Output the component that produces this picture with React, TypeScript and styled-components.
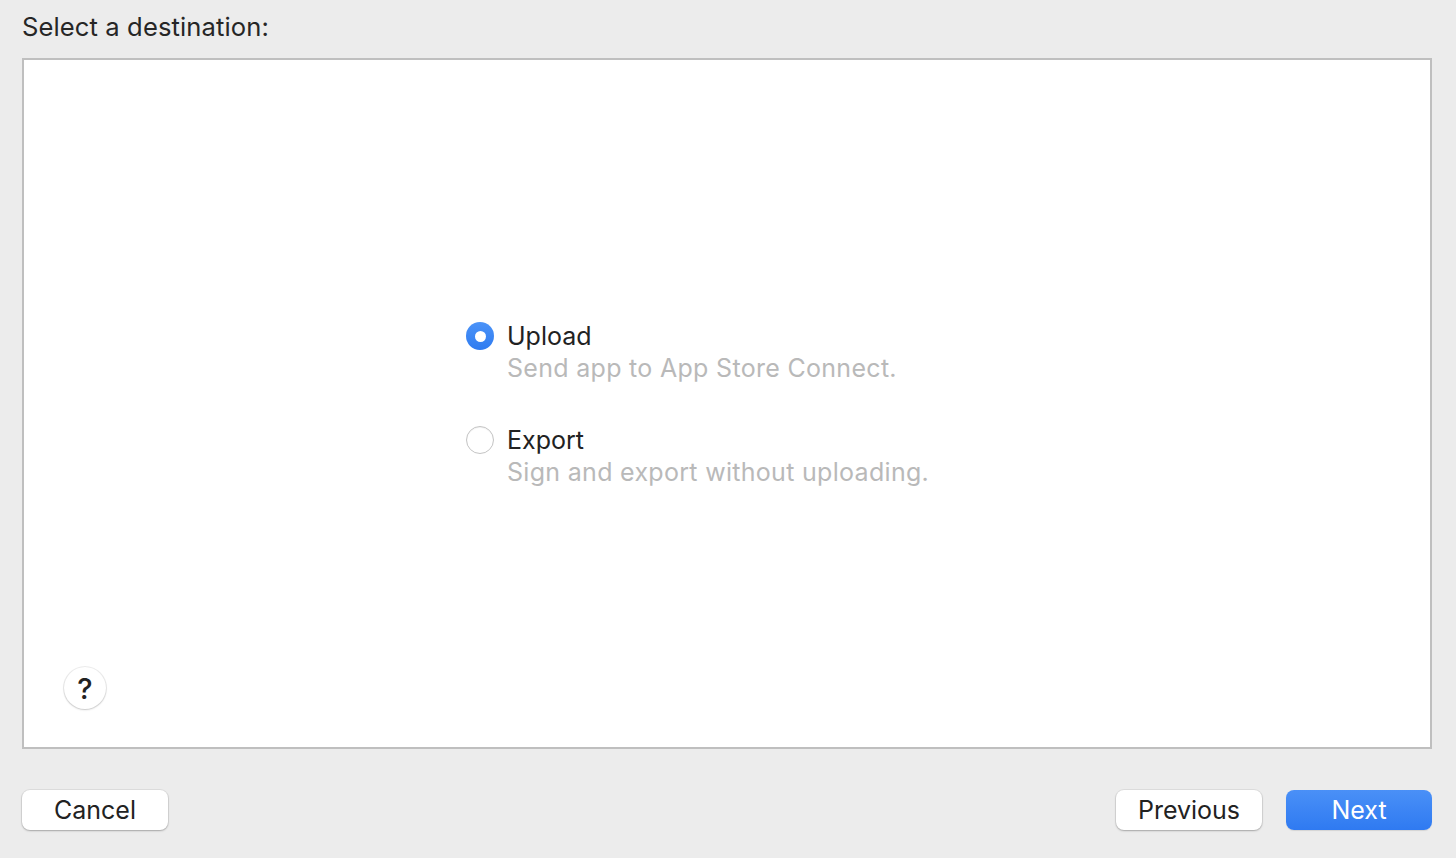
import React, { useState } from "react";
import styled, { createGlobalStyle } from "styled-components";

const Global = createGlobalStyle`
  html, body { margin: 0; padding: 0; background: #ececec; }
  body { font-family: Inter, "Liberation Sans", sans-serif; -webkit-font-smoothing: antialiased; }
  * { box-sizing: border-box; }
`;

const Sheet = styled.div`
  width: 1456px;
  height: 858px;
  background: #ececec;
  padding: 10px 24px 0 22px;
  display: flex;
  flex-direction: column;
`;

const Heading = styled.div`
  font-size: 25.6px;
  line-height: 34px;
  color: #262626;
  letter-spacing: 0.1px;
  height: 48px;
`;

const Panel = styled.div`
  height: 691px;
  background: #fff;
  border: 2px solid #bfbfbf;
  display: flex;
  flex-direction: column;
  padding: 0 0 38px 40px;
`;

const Options = styled.div`
  flex: 1;
  display: flex;
  flex-direction: column;
  padding: 260px 0 0 402px;
  gap: 40px;
`;

const Option = styled.label`
  display: grid;
  grid-template-columns: 28px auto;
  column-gap: 13px;
  align-items: start;
  cursor: default;
`;

const Radio = styled.span<{ $on: boolean }>`
  width: 28px;
  height: 28px;
  border-radius: 50%;
  margin-top: 2px;
  display: flex;
  align-items: center;
  justify-content: center;
  background: ${(p) => (p.$on ? "linear-gradient(#4b93f8, #2f7bf0)" : "#fff")};
  border: ${(p) => (p.$on ? "none" : "1px solid #c4c4c4")};
  box-shadow: ${(p) => (p.$on ? "none" : "inset 0 1px 1px rgba(0,0,0,0.05)")};
  &::after {
    content: "";
    display: ${(p) => (p.$on ? "block" : "none")};
    width: 11px;
    height: 11px;
    border-radius: 50%;
    background: #fff;
  }
`;

const Texts = styled.div`
  display: flex;
  flex-direction: column;
`;

const Title = styled.span`
  font-size: 25px;
  line-height: 32px;
  color: #222;
`;

const Sub = styled.span`
  font-size: 25px;
  line-height: 32px;
  color: #b9b9b9;
  letter-spacing: 0.3px;
`;

const Help = styled.button`
  width: 42px;
  height: 42px;
  border-radius: 50%;
  border: none;
  background: #fff;
  box-shadow: 0 0 0 1px rgba(0, 0, 0, 0.07), 0 1px 2px rgba(0, 0, 0, 0.16);
  font-family: Inter, "Liberation Sans", sans-serif;
  font-size: 29px;
  font-weight: 500;
  color: #222;
  padding: 0;
  display: flex;
  align-items: center;
  justify-content: center;
`;

const Footer = styled.div`
  display: flex;
  align-items: center;
  padding-top: 41px;
  gap: 24px;
`;

const Spacer = styled.div`
  flex: 1;
`;

const Button = styled.button<{ $primary?: boolean }>`
  width: 146px;
  height: 40px;
  border-radius: 8px;
  border: none;
  font-family: Inter, "Liberation Sans", sans-serif;
  font-size: 25px;
  padding: 0;
  color: ${(p) => (p.$primary ? "#fff" : "#222")};
  background: ${(p) => (p.$primary ? "linear-gradient(#4a90f7, #2f7af1)" : "#fff")};
  box-shadow: ${(p) =>
    p.$primary
      ? "0 1px 1px rgba(0,0,0,0.1)"
      : "0 0 0 1px rgba(0,0,0,0.06), 0 1px 2px rgba(0,0,0,0.25)"};
`;

export default function App() {
  const [choice, setChoice] = useState("upload");
  const options = [
    { id: "upload", title: "Upload", sub: "Send app to App Store Connect." },
    { id: "export", title: "Export", sub: "Sign and export without uploading." },
  ];
  return (
    <>
      <Global />
      <Sheet>
        <Heading>Select a destination:</Heading>
        <Panel>
          <Options>
            {options.map((o) => (
              <Option key={o.id} onClick={() => setChoice(o.id)}>
                <Radio $on={choice === o.id} />
                <Texts>
                  <Title>{o.title}</Title>
                  <Sub>{o.sub}</Sub>
                </Texts>
              </Option>
            ))}
          </Options>
          <Help>?</Help>
        </Panel>
        <Footer>
          <Button>Cancel</Button>
          <Spacer />
          <Button>Previous</Button>
          <Button $primary>Next</Button>
        </Footer>
      </Sheet>
    </>
  );
}
